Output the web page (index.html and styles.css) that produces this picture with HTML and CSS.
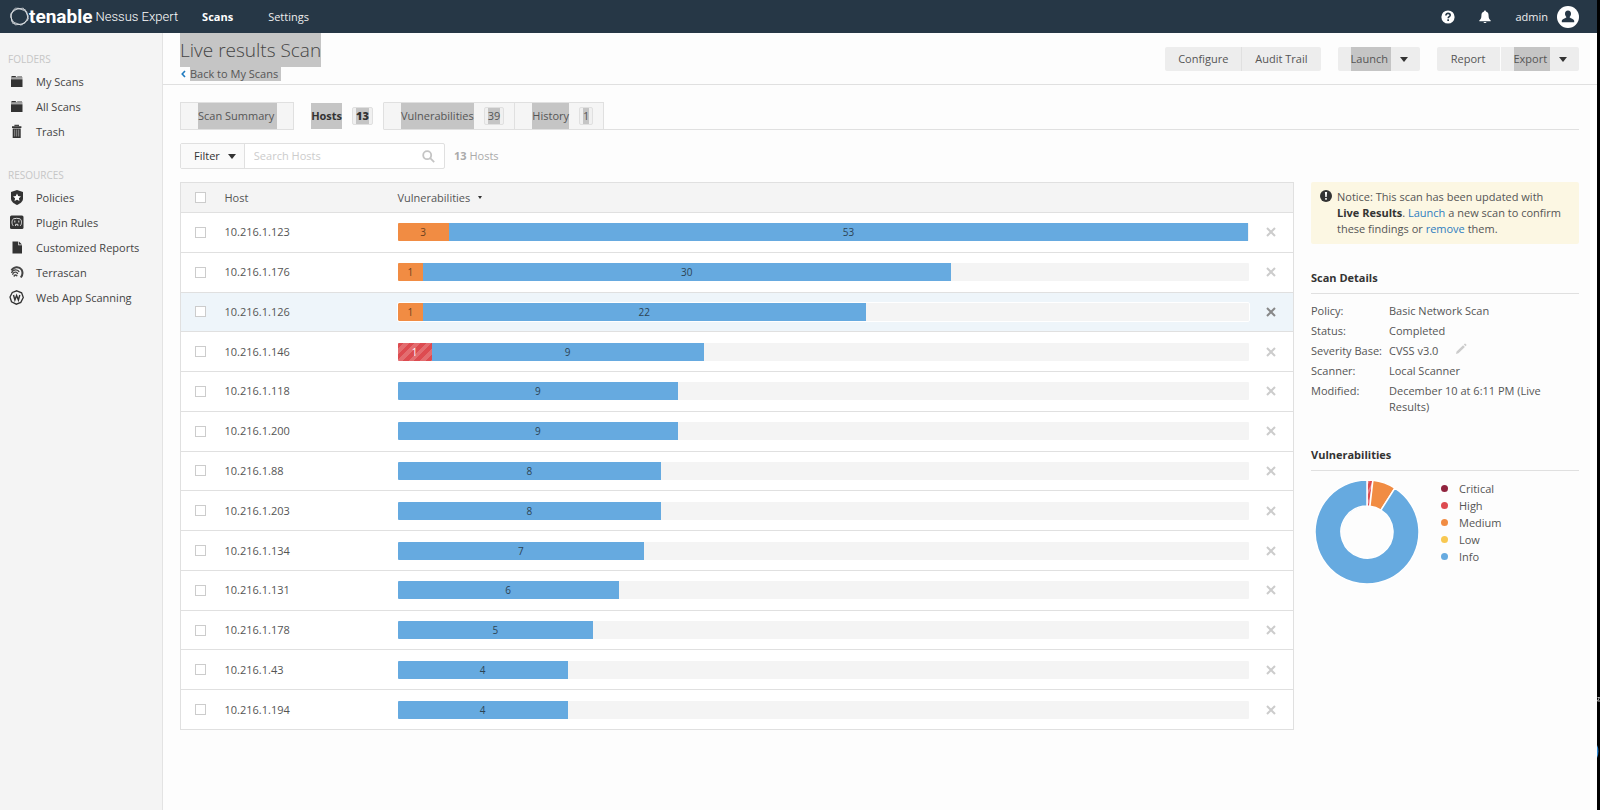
FILE: index.html
```html
<!DOCTYPE html>
<html lang="en">
<head>
<meta charset="utf-8">
<title>Live results Scan - Nessus Expert</title>
<link rel="stylesheet" href="styles.css">
</head>
<body>
<header class="topbar">
  <a class="brand" href="#">
    <svg class="brand-mark" viewBox="0 0 36 36" fill="none" stroke="#e4e8eb" stroke-width="1.3"><path d="M10 2l19 3 6 17-12 12-18-3-4-17z"/><path d="M6 6l19-4 10 15-7 14-18 3L1 19z"/><path d="M2 12l13-10 17 7 2 16-14 9-17-7z"/></svg>
    <span class="brand-name">tenable</span>
    <span class="brand-product">Nessus Expert</span>
  </a>
  <nav class="topnav">
    <a class="topnav-link active" href="#">Scans</a>
    <a class="topnav-link" href="#">Settings</a>
  </nav>
  <div class="user-tools">
    <button class="icon-button" aria-label="Help"><svg width="14" height="14" viewBox="0 0 14 14"><circle cx="7" cy="7" r="6.6" fill="#fff"/><path d="M4.9 5.4c0-2.8 4.3-2.6 4.3-.2 0 1.5-2 1.5-2 3" fill="none" stroke="#263746" stroke-width="1.6"/><rect x="6.3" y="9.3" width="1.7" height="1.7" fill="#263746"/></svg></button>
    <button class="icon-button" aria-label="Notifications"><svg width="12" height="14" viewBox="0 0 12 14" fill="#fff"><path d="M6 .5c.7 0 1 .5 1 1 2.100.6 2.600 2.300 2.600 4.300 0 2.500.6 3.400 2.100 4.700v.8H.3v-.8c1.500-1.300 2.100-2.200 2.100-4.700 0-2 .5-3.700 2.600-4.300 0-.5.300-1 1-1zM4.500 12h3c-.3 1.300-2.700 1.300-3 0z"/></svg></button>
    <a class="account" href="#">admin
      <svg width="22" height="22" viewBox="0 0 22 22"><circle cx="11" cy="11" r="11" fill="#fff"/><path d="M11 4.500c2 0 3.100 1.500 3 3.400-.1 1.500-.8 2.400-1.400 3.200 0 1.300 4.200 1.600 4.600 3.600v1.500H4.800v-1.500c.4-2 4.600-2.300 4.600-3.600C8.800 10.300 8.100 9.400 8 7.900 7.900 6 9 4.500 11 4.500z" fill="#263746"/></svg>
    </a>
  </div>
</header>
<div class="shell">
  <aside class="sidebar">
    <h2 class="side-heading">Folders</h2>
    <ul class="side-list">
      <li><a href="#"><svg viewBox="0 0 15 15"><path fill="#333" d="M2.500 3.300V2h4l1 1.300zM2 5.200h11.500V13H2z"/><path fill="#777" d="M8 2.300h5v1H8.500z"/><path fill="#555" d="M2 3.500h11.500v1H2z"/></svg>My Scans</a></li>
      <li><a href="#"><svg viewBox="0 0 15 15"><path fill="#333" d="M2.500 3.300V2h4l1 1.300zM2 5.200h11.500V13H2z"/><path fill="#777" d="M8 2.300h5v1H8.500z"/><path fill="#555" d="M2 3.500h11.500v1H2z"/></svg>All Scans</a></li>
      <li><a href="#"><svg viewBox="0 0 15 15"><path d="M6 2.200V1.400h3.400v.8" fill="none" stroke="#444" stroke-width="1.200"/><path d="M3 2.300h9.400v1.600H3zM3.700 4.500h8V14h-8z" fill="#333"/><path d="M5.700 5.500v7M7.700 5.500v7M9.700 5.500v7" stroke="#999" stroke-width=".9"/></svg>Trash</a></li>
    </ul>
    <h2 class="side-heading">Resources</h2>
    <ul class="side-list">
      <li><a href="#"><svg viewBox="0 0 15 15" fill="#333"><path d="M8 0l6 2v6.500c0 3.200-3 5-6 6.500-3-1.500-6-3.300-6-6.500V2z"/><path fill="#fff" d="M8 3.500l1.200 2.600 2.800.3-2.100 1.900.6 2.800L8 9.700l-2.500 1.400.6-2.800L4 6.400l2.800-.3z"/></svg>Policies</a></li>
      <li><a href="#"><svg viewBox="0 0 15 15"><rect x="1" y=".5" width="13.500" height="13.500" rx="1.500" fill="#333"/><path d="M4.500 11C2.500 9.500 2.500 5 4.500 3.800q3.200-1 6.500 0c2 1.200 2 5.700 0 7.200" fill="none" stroke="#ddd"/><path d="M5.800 5.500v2M9.800 5.500v2M6.600 11V9.300h2.300V11" stroke="#ddd" fill="none"/></svg>Plugin Rules</a></li>
      <li><a href="#"><svg viewBox="0 0 15 15" fill="#333"><path d="M3.500 1.500h5.700v3.800H13V13.500H3.500zM9.900 1.500L13 4.600H9.900z"/></svg>Customized Reports</a></li>
      <li><a href="#"><svg viewBox="0 0 15 15" fill="none" stroke="#444"><path d="M2.500 5.500C4.500 1.500 10 1 12.500 4.500c1.700 3 1.200 5.500-.7 8" stroke-width="2"/><path d="M2.500 8C4 4 9 4 10.200 7M3.500 9.700C4.500 6.500 8 6.500 8.700 9" stroke-width="1.300"/><path d="M5 11.500c.5-2 2.500-2 3-.3" stroke-width="1.600"/></svg>Terrascan</a></li>
      <li><a href="#"><svg viewBox="0 0 15 15" fill="none" stroke="#333"><path d="M7.800.8l4.800 2 1.700 4.700-2.500 4.900-4.500 1.800-4.800-2.400L1 7l2.300-4.500z" stroke-width="1.300"/><path d="M4.500 5l1.400 5 1.700-4.500 1.800 4.500 1.400-5" stroke-width="1.400"/></svg>Web App Scanning</a></li>
    </ul>
  </aside>
  <main class="main">
    <div class="page-head">
      <div class="titles">
        <h1><span class="mark">Live results Scan</span></h1>
        <a class="back" href="#"><svg width="5" height="8" viewBox="0 0 5 8"><path d="M4 1L1.200 4 4 7" fill="none" stroke="#1f7bc0" stroke-width="1.600"/></svg><span class="mark">Back to My Scans&nbsp;</span></a>
      </div>
      <div class="actions">
        <div class="group"><button>Configure</button><button class="split">Audit Trail</button></div>
        <div class="group"><button><span class="mark">Launch&nbsp;</span></button><button class="drop" aria-label="Launch options"><i class="caret"></i></button></div>
        <div class="group"><button class="report">Report</button><button><span class="mark">Export&nbsp;</span></button><button class="drop" aria-label="Export options"><i class="caret"></i></button></div>
      </div>
    </div>
    <div class="body">
      <nav class="tabs">
        <a class="tab plain" href="#"><span class="mark">Scan Summary&nbsp;</span></a>
        <a class="tab active" href="#"><span class="mark">Hosts</span><span class="count"><b class="mark">13</b></span></a>
        <a class="tab" href="#"><span class="mark">Vulnerabilities</span><span class="count"><span class="mark">39</span></span></a>
        <a class="tab" href="#"><span class="mark">History</span><span class="count"><span class="mark">1</span></span></a>
      </nav>
      <div class="filters">
        <div class="searchbar">
          <button class="filter">Filter<i class="caret"></i></button>
          <input type="text" placeholder="Search Hosts" aria-label="Search Hosts">
          <svg width="13" height="13" viewBox="0 0 13 13" fill="none" stroke="#c4c4c4" stroke-width="1.800"><circle cx="5.200" cy="5.200" r="4"/><path d="M8.200 8.200l4 4"/></svg>
        </div>
        <p class="total"><b>13</b> Hosts</p>
      </div>
      <div class="columns">
        <table class="hosts">
          <thead><tr><th class="pick"><input type="checkbox" aria-label="Select all hosts"></th><th class="host">Host</th><th class="vulns">Vulnerabilities<i class="caret small"></i></th><th class="remove"></th></tr></thead>
          <tbody id="rows"></tbody>
        </table>
        <aside class="details">
          <div class="notice">
            <svg width="12" height="12" viewBox="0 0 12 12"><circle cx="6" cy="6" r="6" fill="#333"/><path d="M4.900 2h2.200l-.4 5H5.300zM5.200 8h1.600v1.700H5.200z" fill="#fff"/></svg>
            <p>Notice: This scan has been updated with <b>Live Results</b>. <a href="#">Launch</a> a new scan to confirm these findings or <a href="#">remove</a> them.</p>
          </div>
          <h2>Scan Details</h2>
          <dl>
            <dt>Policy:</dt><dd>Basic Network Scan</dd>
            <dt>Status:</dt><dd>Completed</dd>
            <dt>Severity Base:</dt><dd>CVSS v3.0 <button class="edit" aria-label="Edit severity base"><svg width="12" height="12" viewBox="0 0 12 12" fill="#ccc"><path d="M1 11l.6-2.400 6.500-6.400 1.800 1.700-6.500 6.400zM8.800 1.500l.8-.8q.4-.3.800 0l.9.900q.3.400 0 .8l-.7.800z"/></svg></button></dd>
            <dt>Scanner:</dt><dd>Local Scanner</dd>
            <dt>Modified:</dt><dd>December 10 at 6:11 PM (Live Results)</dd>
          </dl>
          <h2>Vulnerabilities</h2>
          <div class="chart">
            <svg width="104" height="104" viewBox="-52 -52 104 104">
              <defs><pattern id="stripes" width="5" height="5" patternUnits="userSpaceOnUse" patternTransform="rotate(30)"><rect width="5" height="5" fill="#dd4b50"/><rect width="2" height="5" fill="#e98387"/></pattern></defs>
              <g id="donut"></g>
            </svg>
            <ul class="legend">
              <li class="critical">Critical</li><li class="high">High</li><li class="medium">Medium</li><li class="low">Low</li><li class="info">Info</li>
            </ul>
          </div>
        </aside>
      </div>
    </div>
  </main>
  <div class="edge"><svg width="3" height="68" viewBox="0 0 3 68"><path d="M.5 1.500h2L.5 5H3" fill="none" stroke="#bbb"/><path d="M0 49q3 6 0 13z" fill="#2f86d0"/></svg></div>
</div>
<script src="app.js"></script>
</body>
</html>
```
FILE: styles.css
```css
* { box-sizing: border-box; }
body { margin: 0; min-height: 100vh; display: flex; flex-direction: column; font: 11px/16px "Open Sans", "Noto Sans", sans-serif; color: #555; background: #fdfdfd; }
a { color: inherit; text-decoration: none; }
h1, h2, p, ul, dl, dd { margin: 0; padding: 0; }
ul { list-style: none; }
button { border: 0; padding: 0; background: none; font: inherit; color: inherit; }
.mark { background: #c5c5c5; }
.caret { display: inline-block; border: 4px solid transparent; border-top: 5px solid #333; border-bottom: 0; }
.caret.small { border-width: 3px 2px 0; margin-left: 8px; vertical-align: 3px; }

.topbar { display: flex; align-items: center; height: 33px; padding: 0 18px 0 10px; background: #263746; color: #eee; border-right: 3px solid #000; }
.brand { display: flex; align-items: center; }
.brand-mark { width: 19px; height: 19px; }
.brand-name { font: 700 19px/20px Roboto, sans-serif; color: #fff; }
.brand-product { margin-left: 3px; font: 300 13px/20px Roboto, sans-serif; color: #fff; }
.topnav { display: flex; gap: 35px; margin-left: 24px; }
.topnav-link.active { font-weight: 700; color: #fff; }
.user-tools { display: flex; align-items: center; gap: 24px; margin-left: auto; }
.icon-button, .icon-button svg { display: block; }
.account { display: flex; align-items: center; gap: 9px; }

.shell { flex: 1; display: flex; }
.sidebar { flex: 0 0 163px; padding-top: 18px; background: #f4f4f4; border-right: 1px solid #e3e3e3; }
.side-heading { padding-left: 8px; font-size: 10px; line-height: 16px; font-weight: 400; text-transform: uppercase; color: #c6c6c6; }
.side-list { padding: 2px 0 23px; }
.side-list a { display: flex; align-items: center; gap: 12px; height: 25px; padding-left: 9px; color: #444; }
.side-list svg { width: 15px; height: 15px; }
.main { flex: 1; min-width: 0; }
.edge { position: relative; flex: 0 0 3px; background: #000; }
.edge svg { position: absolute; left: 0; bottom: 46px; }

.page-head { display: flex; justify-content: space-between; padding: 0 18px 0 17px; min-height: 52px; border-bottom: 1px solid #e0e0e0; }
h1 { font-size: 19px; line-height: 34px; font-weight: 300; color: #444; }
h1 .mark { display: inline-block; }
.back { display: flex; align-items: center; gap: 4px; padding-left: 1px; line-height: 14px; }
.actions { display: flex; gap: 17px; padding-top: 14px; }
.group { display: flex; height: 24px; }
.group button { padding: 0 13px; line-height: 24px; background: #ededed; }
.group button:first-child { border-radius: 2px 0 0 2px; }
.group button:last-child { border-radius: 0 2px 2px 0; }
.group .mark { display: block; }
.group .split { border-left: 1px solid #e0e0e0; }
.group .report { margin-right: 1px; padding: 0 14px; }
.group button:has(.mark) { padding-right: 0; }
.group .drop { display: flex; align-items: center; padding: 0 12px 0 9px; }

.body { padding: 17px 18px 24px 17px; }
.tabs { display: flex; border-bottom: 1px solid #e0e0e0; }
.tab { display: flex; align-items: center; gap: 10px; margin-bottom: -1px; padding: 0 10px 0 17px; border: 1px solid #e0e0e0; border-left-width: 0; background: #f5f5f5; line-height: 26px; }
.tab.plain { border-left-width: 1px; padding-right: 16px; }
.tab.active { border-color: transparent #e0e0e0 transparent transparent; background: #fdfdfd; font-weight: 700; color: #333; }
.count { padding: 0 3px; border: 1px solid #e0e0e0; border-radius: 2px; background: #f0f0f0; line-height: 16px; }
.count .mark { display: block; }

.filters { display: flex; align-items: center; gap: 9px; padding: 13px 0; }
.searchbar { display: flex; align-items: center; width: 265px; height: 26px; padding-right: 9px; border: 1px solid #e0e0e0; border-radius: 2px; background: #fff; }
.filter { display: flex; align-items: center; gap: 8px; height: 24px; padding: 0 8px 0 13px; border-right: 1px solid #e0e0e0; background: #fafafa; color: #333; }
.searchbar input { flex: 1; min-width: 0; border: 0; padding: 0 9px; background: none; font: inherit; outline: 0; }
.searchbar input::placeholder { color: #ccc; }
.total { color: #aaa; }

.columns { display: grid; grid-template-columns: minmax(0, 1fr) 268px; gap: 17px; align-items: start; }
.hosts { width: 100%; height: 548px; border-collapse: collapse; table-layout: fixed; border: 1px solid #e0e0e0; background: #fff; }
.hosts th { height: 30px; padding: 0; text-align: left; font-weight: 400; background: #f4f4f4; }
.hosts td { padding: 0; border-top: 1px solid #e0e0e0; }
.hosts .pick { width: 44px; padding-left: 14px; }
.hosts .host { width: 173px; }
.hosts .remove { width: 45px; text-align: center; }
.hosts input { appearance: none; display: block; width: 11px; height: 11px; margin: 0; border: 1px solid #ccc; background: #fff; }
.hosts button, .hosts button svg { display: block; margin: 0 auto; }
.hosts button { color: #ccc; }
.hosts .hovered { background: #eef5fa; }
.hosts .hovered button { color: #888; }
.track { display: flex; height: 18px; border-radius: 1px; background: #f4f4f4; overflow: hidden; font-size: 10px; line-height: 18px; text-align: center; color: #2d4454; }
.hovered .track { outline: 1px solid #fff; }
.bar.info { background: #66aae0; }
.bar.medium { background: #f18c43; color: #6b421f; }
.bar.high { background: repeating-linear-gradient(135deg, #dd4b50 0 4px, #e36d70 4px 8px); color: #fff; }

.notice { display: flex; gap: 5px; align-items: flex-start; padding: 7px 14px 7px 9px; border-radius: 2px; background: #fcf7e3; }
.notice svg { flex: none; margin-top: 1px; }
.notice p { line-height: 16px; }
.notice b { color: #333; }
.notice a { color: #2f7dc0; }
.details h2 { margin: 26px 0 9px; padding-bottom: 7px; border-bottom: 1px solid #e0e0e0; font-size: 11px; line-height: 16px; color: #333; }
.details dl { display: grid; grid-template-columns: 78px 1fr; row-gap: 4px; }
.details dl + h2 { margin-top: 32px; }
.details dt { white-space: nowrap; }
.edit { margin-left: 14px; }
.edit svg { display: block; }
.chart { display: flex; gap: 22px; padding-left: 4px; }
.legend li { display: flex; align-items: center; gap: 11px; line-height: 17px; }
.legend li::before { content: ""; width: 7px; height: 7px; border-radius: 50%; background: #66aae0; }
.legend .critical::before { background: #91243e; }
.legend .high::before { background: #dd4b50; }
.legend .medium::before { background: #f18c43; }
.legend .low::before { background: #f8c851; }
```
FILE: app.js
```js
// Each segment is [severity, count, width in percent of the track].
const hosts = [
  ["10.216.1.123", [["medium", 3, 6], ["info", 53, 94]]],
  ["10.216.1.176", [["medium", 1, 3], ["info", 30, 62]]],
  ["10.216.1.126", [["medium", 1, 3], ["info", 22, 52]], true],
  ["10.216.1.146", [["high", 1, 4], ["info", 9, 32]]],
  ["10.216.1.118", [["info", 9, 33]]],
  ["10.216.1.200", [["info", 9, 33]]],
  ["10.216.1.88", [["info", 8, 31]]],
  ["10.216.1.203", [["info", 8, 31]]],
  ["10.216.1.134", [["info", 7, 29]]],
  ["10.216.1.131", [["info", 6, 26]]],
  ["10.216.1.178", [["info", 5, 23]]],
  ["10.216.1.43", [["info", 4, 20]]],
  ["10.216.1.194", [["info", 4, 20]]]
];
document.getElementById("rows").innerHTML = hosts.map(([ip, bars, hovered]) => `
  <tr class="${hovered ? "hovered" : ""}">
    <td class="pick"><input type="checkbox" aria-label="Select ${ip}"></td>
    <td>${ip}</td>
    <td><div class="track">${bars.map(([s, n, w]) => `<div class="bar ${s}" style="width:${w}%">${n}</div>`).join("")}</div></td>
    <td class="remove"><button aria-label="Remove ${ip}"><svg width="10" height="10" viewBox="0 0 10 10"><path d="M1 1l8 8M9 1L1 9" stroke="currentColor" stroke-width="2"/></svg></button></td>
  </tr>`).join("");

// Donut slices, clockwise from the top, in fractions of a turn.
const slices = [["url(#stripes)", 0, 0.018], ["#f18c43", 0.018, 0.09], ["#66aae0", 0.09, 1]];
const point = (r, t) => `${r * Math.sin(2 * Math.PI * t)} ${-r * Math.cos(2 * Math.PI * t)}`;
document.getElementById("donut").innerHTML = slices.map(([fill, a, b]) => {
  const large = b - a > 0.5 ? 1 : 0;
  return `<path fill="${fill}" stroke="#fff" stroke-width="1.5" d="M${point(52, a)}A52 52 0 ${large} 1 ${point(52, b)}L${point(26, b)}A26 26 0 ${large} 0 ${point(26, a)}Z"/>`;
}).join("");
```
